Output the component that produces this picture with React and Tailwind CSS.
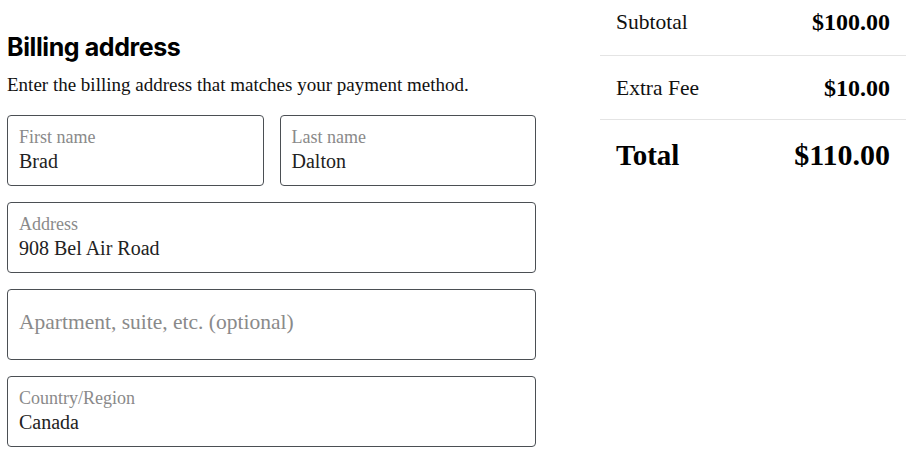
const serif = { fontFamily: '"Liberation Serif", "DejaVu Serif", serif' };

function Field({ label, value, className = "" }) {
  return (
    <div className={`h-[71px] rounded-[4px] border border-[#4b4f54] pl-[11px] pr-3 pt-[10px] ${className}`}>
      <div className="text-[18px] leading-[22px] text-[#8a8a8a]">{label}</div>
      <div className="text-[20px] leading-[26px] text-[#222]">{value}</div>
    </div>
  );
}

function Placeholder({ text }) {
  return (
    <div className="flex h-[71px] items-center rounded-[4px] border border-[#4b4f54] pb-[5px] pl-[11px] pr-3">
      <span className="text-[21.5px] leading-[26px] text-[#8a8a8a]">{text}</span>
    </div>
  );
}

function Row({ label, amount, className = "", big = false }) {
  return (
    <div className={`flex items-center justify-between px-4 ${className}`}>
      <span className={big ? "text-[29px] font-bold leading-[34px] text-black" : "text-[21.5px] leading-[28px] text-[#111]"}>{label}</span>
      <span className={big ? "text-[30px] font-bold leading-[34px] text-black" : "text-[24px] font-bold leading-[28px] text-black"}>{amount}</span>
    </div>
  );
}

export default function App() {
  return (
    <div className="flex h-[454px] w-[919px] gap-[64px] overflow-hidden bg-white pl-[7px] pr-[13px]" style={serif}>
      <div className="w-[529px] pt-[31px]">
        <h2 className="text-[25px] font-bold leading-[32px] tracking-[-0.4px] text-black" style={{ fontFamily: 'Inter, "Liberation Sans", sans-serif' }}>
          Billing address
        </h2>
        <p className="mt-2 text-[19px] leading-[28px] text-[#111]">Enter the billing address that matches your payment method.</p>
        <div className="mt-4 flex flex-col gap-4">
          <div className="grid grid-cols-2 gap-4">
            <Field label="First name" value="Brad" />
            <Field label="Last name" value="Dalton" />
          </div>
          <Field label="Address" value="908 Bel Air Road" />
          <Placeholder text="Apartment, suite, etc. (optional)" />
          <Field label="Country/Region" value="Canada" />
        </div>
      </div>
      <div className="w-[306px]">
        <Row label="Subtotal" amount="$100.00" className="h-[55px] pb-[11px]" />
        <div className="h-px bg-[#e4e4e4]" />
        <Row label="Extra Fee" amount="$10.00" className="h-[63px]" />
        <div className="h-px bg-[#e4e4e4]" />
        <Row label="Total" amount="$110.00" big className="h-[70px]" />
      </div>
    </div>
  );
}
